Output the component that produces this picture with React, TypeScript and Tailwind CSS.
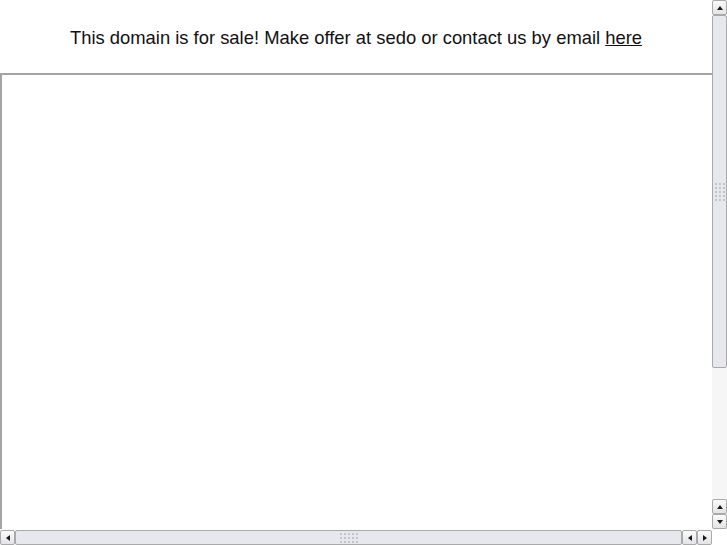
import React from "react";

const Arrow = ({ dir }: { dir: "up" | "down" | "left" | "right" }) => {
  const pts = {
    up: "1,5 4,1 7,5",
    down: "1,1 4,5 7,1",
    left: "5,1 1,4 5,7",
    right: "1,1 5,4 1,7",
  }[dir];
  const vertical = dir === "up" || dir === "down";
  return (
    <svg width={vertical ? 8 : 6} height={vertical ? 6 : 8} viewBox={vertical ? "0 0 8 6" : "0 0 6 8"}>
      <polygon points={pts} fill="#1a1a1a" />
    </svg>
  );
};

const ScrollButton = ({ dir }: { dir: "up" | "down" | "left" | "right" }) => (
  <div className="flex h-[15px] w-[15px] shrink-0 items-center justify-center rounded-[2px] border border-[#a9a9a9] bg-gradient-to-b from-[#fbfbfb] to-[#e4e4e8]">
    <Arrow dir={dir} />
  </div>
);

const Grip = ({ vertical }: { vertical?: boolean }) => (
  <div className={vertical ? "grid grid-cols-3 gap-[2px]" : "grid grid-cols-5 gap-[2px]"}>
    {Array.from({ length: 15 }).map((_, i) => (
      <div key={i} className="h-[2px] w-[2px] bg-[#c4c4cc]" />
    ))}
  </div>
);

const App = () => {
  return (
    <div className="flex h-[545px] w-[727px] flex-col overflow-hidden bg-white" style={{ fontFamily: '"Liberation Sans", Arial, sans-serif' }}>
      <div className="flex min-h-0 flex-1">
        <div className="flex w-[712px] flex-col">
          <div className="flex h-[73px] items-center justify-center pt-[2px] text-[18.4px] text-[#111]">
            <p>
              This domain is for sale! Make offer at sedo or contact us by email{" "}
              <a href="#" className="underline">
                here
              </a>
            </p>
          </div>
          <div className="flex-1 border-l-2 border-t-2 border-[#a4a4a4] bg-white" />
        </div>
        <div className="flex w-[15px] flex-col bg-[#f5f5f7]">
          <ScrollButton dir="up" />
          <div className="flex h-[353px] items-center justify-center rounded-[2px] border border-[#a9a9a9] bg-[#e7e7ee]">
            <Grip vertical />
          </div>
          <div className="flex-1 bg-[#f6f6f6]" />
          <ScrollButton dir="up" />
          <ScrollButton dir="down" />
        </div>
      </div>
      <div className="flex h-[16px] pt-[1px]">
        <div className="flex w-[712px] bg-[#f5f5f7]">
          <ScrollButton dir="left" />
          <div className="flex flex-1 items-center justify-center rounded-[2px] border border-[#a9a9a9] bg-[#e7e7ee]">
            <Grip />
          </div>
          <ScrollButton dir="left" />
          <ScrollButton dir="right" />
        </div>
        <div className="w-[15px] bg-white" />
      </div>
    </div>
  );
};

export default App;
